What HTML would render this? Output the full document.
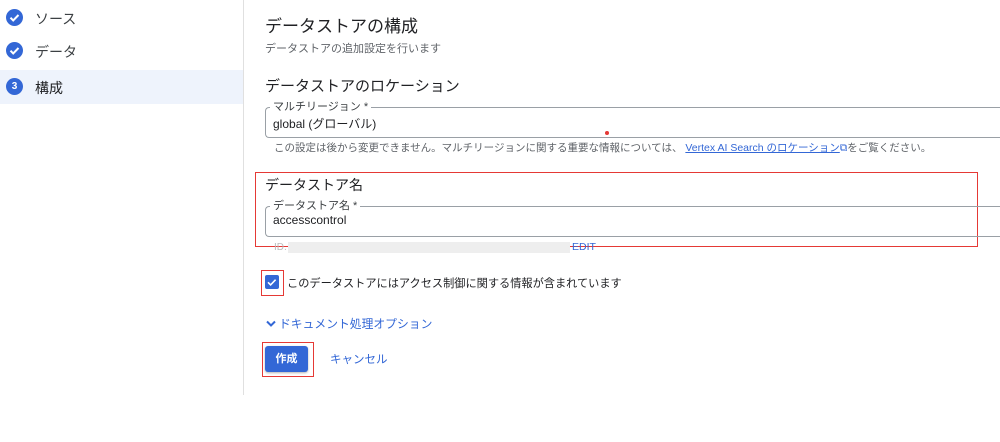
<!DOCTYPE html>
<html><head><meta charset="utf-8"><style>
body{margin:0;width:1000px;height:442px;background:#fff;position:relative;overflow:hidden;font-family:"Liberation Sans","Noto Sans CJK JP",sans-serif;color:#202124}
.a{position:absolute;white-space:nowrap}
.ic{position:absolute;width:17px;height:17px;border-radius:50%;background:#3367d6;color:#fff;font-size:10px;font-weight:bold;text-align:center;line-height:17px}
.red{position:absolute;border:1.5px solid #e53935}
.fld{position:absolute;border:1px solid #9aa0a6;border-radius:4px;border-right:none}
.lbl{position:absolute;background:#fff;font-size:11px;color:#3c4043;padding:0 3px;line-height:12px}
</style></head><body>
<div class="a" style="left:0;top:0;width:243px;height:395px;border-right:1px solid #e0e0e0"></div>
<div class="a" style="left:0;top:70px;width:243px;height:34px;background:#eef3fc"></div>
<div class="ic" style="left:6px;top:9px"><svg width="17" height="17"><path d="M4.5 8.7l2.7 2.7 5.3-5.4" stroke="#fff" stroke-width="2" fill="none"/></svg></div>
<div class="ic" style="left:6px;top:42px"><svg width="17" height="17"><path d="M4.5 8.7l2.7 2.7 5.3-5.4" stroke="#fff" stroke-width="2" fill="none"/></svg></div>
<div class="ic" style="left:6px;top:78px">3</div>
<div class="a" style="left:35px;top:9px;font-size:14px;color:#3c4043">ソース</div>
<div class="a" style="left:35px;top:42px;font-size:14px;color:#3c4043">データ</div>
<div class="a" style="left:35px;top:78px;font-size:14px;color:#202124">構成</div>

<div class="a" style="left:265px;top:12px;font-size:17px">データストアの構成</div>
<div class="a" style="left:265px;top:40px;font-size:11px;color:#5f6368">データストアの追加設定を行います</div>
<div class="a" style="left:265px;top:75px;font-size:15px">データストアのロケーション</div>
<div class="fld" style="left:265px;top:107px;width:740px;height:29px"></div>
<div class="lbl" style="left:270px;top:101px">マルチリージョン *</div>
<div class="a" style="left:273px;top:115px;font-size:12px">global (グローバル)</div>
<div class="a" style="left:605px;top:131px;width:4px;height:4px;border-radius:50%;background:#e53935"></div>
<div class="a" style="left:274px;top:140px;font-size:10.5px;color:#5f6368">この設定は後から変更できません。マルチリージョンに関する重要な情報については、 <span style="color:#3367d6;text-decoration:underline">Vertex AI Search のロケーション</span><span style="color:#3367d6">⧉</span>をご覧ください。</div>

<div class="red" style="left:255px;top:172px;width:721px;height:73px"></div>
<div class="a" style="left:265px;top:175px;font-size:14px">データストア名</div>
<div class="fld" style="left:265px;top:206px;width:740px;height:29px"></div>
<div class="lbl" style="left:270px;top:200px">データストア名 *</div>
<div class="a" style="left:273px;top:213px;font-size:12px">accesscontrol</div>
<div class="a" style="left:274px;top:242px;font-size:10px;color:#bbb">ID.</div>
<div class="a" style="left:288px;top:242px;width:282px;height:11px;background:#eeeeee"></div>
<div class="a" style="left:572px;top:241px;font-size:10.5px;color:#3367d6">EDIT</div>

<div class="red" style="left:261px;top:270px;width:21px;height:24px"></div>
<div class="a" style="left:265px;top:275px;width:14px;height:14px;background:#3367d6;border-radius:2px"><svg width="14" height="14"><path d="M3 7.3l2.6 2.6 5-5.2" stroke="#fff" stroke-width="1.6" fill="none"/></svg></div>
<div class="a" style="left:287px;top:275px;font-size:11.2px">このデータストアにはアクセス制御に関する情報が含まれています</div>

<div class="a" style="left:265px;top:315px;font-size:11.8px;color:#3367d6"><svg width="14" height="10" style="vertical-align:-1px"><path d="M2 2.5l4 4 4-4" stroke="#3367d6" stroke-width="2" fill="none"/></svg>ドキュメント処理オプション</div>

<div class="red" style="left:262px;top:342px;width:50px;height:33px"></div>
<div class="a" style="left:265px;top:346px;width:43px;height:26px;background:#3367d6;border-radius:3px;color:#fff;font-size:11px;font-weight:bold;text-align:center;line-height:26px;box-shadow:0 1px 2px rgba(0,0,0,.3)">作成</div>
<div class="a" style="left:330px;top:351px;font-size:11.5px;color:#3367d6">キャンセル</div>
</body></html>
